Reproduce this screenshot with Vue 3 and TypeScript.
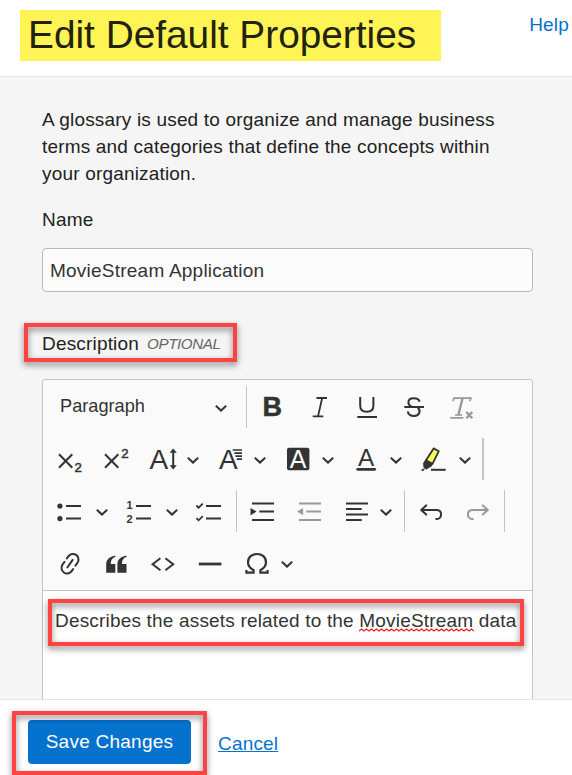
<script setup lang="ts">
import { ref } from 'vue'

interface Tool {
  kind: 'button' | 'dropdown' | 'split' | 'separator'
  label?: string
  icon?: string
  disabled?: boolean
  thick?: boolean
  compact?: boolean
}

const name = ref('MovieStream Application')
const separator: Tool = { kind: 'separator' }

const capital = (x: number, y: number, size: number, extra = '') =>
  `<text x="${x}" y="${y}" font-size="${size}" fill="currentColor" stroke="none" ${extra}>A</text>`
const digit = (value: string, x: number, y: number, size: number, weight = 700) =>
  `<text x="${x}" y="${y}" font-size="${size}" font-weight="${weight}" fill="currentColor" stroke-width="${weight > 400 ? 0 : 0.5}">${value}</text>`

const squiggle = 'M0 3' + Array.from({ length: 23 }, () => 'l2.500-2 2.500 2').join('')

const formatting: Tool[] = [
  { kind: 'button', label: 'Bold', icon: '<text x="3.4" y="23.4" font-size="27" font-weight="700" fill="currentColor" stroke-width=".5">B</text>' },
  { kind: 'button', label: 'Italic', icon: '<path stroke-width="1.8" d="M10.5 5h10.5M6.7 23.3h10.6M16.2 5l-4.2 18.3"/>' },
  { kind: 'button', label: 'Underline', icon: '<path d="M7.2 4v8.5c0 4 2.5 6.3 6.6 6.3s6.6-2.3 6.600-6.300V4M4.300 24H24"/>' },
  { kind: 'button', label: 'Strikethrough', icon: '<path d="M19.6 8.800C18.600 3.900 8.400 3.800 8.400 9.200c0 2 1 3.400 3 4.300M17.700 14.500c3.600 3.200 1.800 8.400-3.600 8.400-3.600 0-5.900-1.500-6.300-4.600M4.300 13.900H24"/>' },
  { kind: 'button', label: 'Remove format', disabled: true, icon: '<path stroke-width="1.7" d="M6 8.200l.9-3h17l-.9 3M8 22h7M3.300 24.800h13"/><path stroke-width="2.400" d="M15.500 5.200L11.400 22"/><path stroke-width="2.300" d="M19.300 19l6 6.200M25.300 19l-6 6.200"/>' },
]

const rows: Tool[][] = [
  [
    { kind: 'button', label: 'Subscript', icon: '<path d="M3 9.2l13.3 13.6M16.3 9.2L3 22.8"/>' + digit('2', 18.4, 26.6, 13.2, 400) },
    { kind: 'button', label: 'Superscript', icon: '<path d="M2 9.2l13.3 13.6M15.3 9.2L2 22.8"/>' + digit('2', 18.3, 13.4, 13.2, 400) },
    { kind: 'dropdown', label: 'Font size', icon: capital(-0.4, 24, 28) + '<path d="M23.2 6v16"/><path fill="currentColor" stroke="none" d="M23.2 3.6l3.6 4.2h-7.2zM23.2 24.4l3.6-4.2h-7.2z"/>' },
    { kind: 'dropdown', label: 'Font family', compact: true, icon: capital(1, 24, 28) + '<path stroke-width="1.6" d="M14.7 5H24M16.3 8.1H24M17.5 11.1H24M18.8 14.1H24"/>' },
    { kind: 'dropdown', label: 'Font background', compact: true, icon: '<rect x="1" y="2.8" width="22.4" height="22.4" rx="2" fill="currentColor" stroke="none"/><text x="3.7" y="22.5" font-size="25" fill="#fff" stroke="none">A</text>' },
    { kind: 'dropdown', label: 'Font colour', compact: true, icon: capital(4, 21, 24.3) + '<path stroke-width="2.8" stroke-linecap="round" d="M3.7 24.3h17"/>' },
    { kind: 'dropdown', label: 'Highlight', icon: '<path fill="#fdfb5e" stroke-width="1.8" stroke-linejoin="round" d="M11.6 3.4l5.2 2.8L10.5 18.8 4 15.3z"/><path fill="currentColor" stroke="none" d="M3.4 14.6l7.8 4.2-1.7 2.8-5.3 2.8-2.5-1.3-.7-4.7zM.6 23.4l2.2 1.2-1.1 1.2h-2.8z"/><path d="M9 24.8h14.7"/>' },
    { kind: 'separator', thick: true },
  ],
  [
    { kind: 'split', label: 'Bulleted list', icon: '<circle cx="3.9" cy="9" r="2.6" fill="currentColor" stroke="none"/><circle cx="3.9" cy="21.6" r="2.6" fill="currentColor" stroke="none"/><path d="M10 9h15M10 21.6h15"/>' },
    { kind: 'split', label: 'Numbered list', icon: digit('1', 0.4, 12.4, 11) + digit('2', 0.4, 25.9, 11) + '<path d="M10 9h15M10 21.6h15"/>' },
    { kind: 'button', label: 'To-do list', icon: '<path stroke-width="1.8" d="M.4 8.5l2.2 2.2 4.2-4.1M.4 21.1l2.2 2.2 4.2-4.1"/><path d="M10 9h15M10 21.6h15"/>' },
    separator,
    { kind: 'button', label: 'Increase indent', icon: '<path d="M3 6.4h22M10.3 14.6H25M3 23h22"/><path fill="currentColor" stroke="none" d="M1.5 10.9l6.1 3.7-6.1 3.7z"/>' },
    { kind: 'button', label: 'Decrease indent', disabled: true, icon: '<path d="M3 6.4h22M10.3 14.6H25M3 23h22"/><path fill="currentColor" stroke="none" d="M7.1 10.9L1 14.6l6.1 3.7z"/>' },
    { kind: 'dropdown', label: 'Text alignment', icon: '<path d="M3 6.4h22M3 11.9h15.7M3 17.4h22M3 23h15.7"/>' },
    separator,
    { kind: 'button', label: 'Undo', icon: '<path stroke-linecap="round" stroke-linejoin="round" d="M9.200 8.400L4.200 13l5 4.600M4.200 13h14.900c3.200 0 5 1.700 5 4.400s-2 4.600-4.900 4.600"/>' },
    { kind: 'button', label: 'Redo', disabled: true, icon: '<path stroke-linecap="round" stroke-linejoin="round" d="M18.800 8.400l5 4.600-5 4.600M23.800 13H8.900c-3.200 0-5 1.700-5 4.400s2 4.600 4.900 4.600"/>' },
    separator,
  ],
  [
    { kind: 'button', label: 'Link', icon: '<g transform="translate(14 14.7) rotate(35)" stroke-linecap="round"><path d="M-5.6-2.5v-2.6a5.6 5.6 0 0 1 11.2 0v3.6M5.6 2.5v2.6a5.6 5.6 0 0 1-11.2 0V1.5M0-4.6v9.2"/></g>' },
    { kind: 'button', label: 'Block quote', icon: '<path fill="currentColor" stroke="none" d="M3.2 23.8v-8.6c0-4.5 3.4-8 9.1-8.5v1.2c-2.8.7-4.6 3-4.6 7.1h4.6v8.8zM14.4 23.8v-8.6c0-4.5 3.4-8 9.1-8.5v1.2c-2.8.7-4.6 3-4.6 7.1h4.6v8.8z"/>' },
    { kind: 'button', label: 'Source', icon: '<path d="M10.4 9.3l-7.8 6 7.8 6M15.4 9.3l7.8 6-7.8 6"/>' },
    { kind: 'button', label: 'Horizontal line', icon: '<path stroke-width="2.8" d="M1.8 15h22.6"/>' },
    { kind: 'dropdown', label: 'Special characters', icon: '<path stroke-width="2.2" d="M2.4 21v2.7h7.2v-2.5C6.3 19.5 4 17 4 13.3c0-5.2 4-8.3 9-8.3s9 3.1 9 8.3c0 3.7-2.3 6.2-5.6 7.9v2.5h7.2V21"/>' },
  ],
]
</script>

<template>
  <div class="panel">
    <header class="head">
      <h1 class="title">Edit Default Properties</h1>
      <a class="help">Help</a>
    </header>

    <main class="content">
      <p class="intro">A glossary is used to organize and manage business<br>terms and categories that define the concepts within<br>your organization.</p>
      <label class="label" for="name">Name</label>
      <input id="name" v-model="name" class="input" type="text">
      <div class="label description">
        Description<em class="optional">OPTIONAL</em>
        <span class="mark mark-label"></span>
      </div>

      <section class="editor">
        <div class="toolbar">
          <div class="row">
            <button class="heading" type="button">
              <span>Paragraph</span>
              <svg class="chevron" viewBox="0 0 12 7"><path d="M.8.8 6 5.6 11.2.8" /></svg>
            </button>
            <i class="separator"></i>
            <button v-for="tool in formatting" :key="tool.label" class="tool" :class="{ disabled: tool.disabled }" type="button" :aria-label="tool.label">
              <svg class="icon" viewBox="0 0 28 28" v-html="tool.icon"></svg>
            </button>
          </div>
          <div v-for="(row, r) in rows" :key="r" class="row">
            <template v-for="(tool, i) in row" :key="i">
              <i v-if="tool.kind === 'separator'" class="separator" :class="{ thick: tool.thick }"></i>
              <button v-else class="tool" :class="[tool.kind, { disabled: tool.disabled, compact: tool.compact }]" type="button" :aria-label="tool.label">
                <svg class="icon" viewBox="0 0 28 28" v-html="tool.icon"></svg>
                <svg v-if="tool.kind !== 'button'" class="chevron" viewBox="0 0 12 7"><path d="M.8.8 6 5.6 11.2.8" /></svg>
              </button>
            </template>
          </div>
        </div>
        <div class="editable">
          Describes the assets related to the <span class="misspelt">MovieStream<svg class="squiggle" viewBox="0 0 115 4"><path :d="squiggle" /></svg></span> data
          <span class="mark mark-text"></span>
        </div>
      </section>
    </main>

    <footer class="foot">
      <button class="save" type="button">Save Changes</button>
      <a class="cancel">Cancel</a>
      <span class="mark mark-save"></span>
    </footer>
  </div>
</template>

<style>
body {
  margin: 0;
  overflow: hidden;
}
</style>

<style scoped>
.panel {
  display: flex;
  flex-direction: column;
  width: 572px;
  height: 775px;
  overflow: hidden;
  background: #fff;
  color: #222;
  font-family: "Liberation Sans", Arial, sans-serif;
  font-size: 19px;
  letter-spacing: 0.18px;
}
.panel * {
  box-sizing: border-box;
}
button {
  padding: 0;
  border: 0;
  background: none;
  color: inherit;
  font: inherit;
  letter-spacing: inherit;
}
.head {
  display: flex;
  flex: none;
  align-items: flex-start;
  justify-content: space-between;
  height: 77px;
  padding: 10px 3px 0 20px;
  border-bottom: 1px solid #e3e3e3;
}
.title {
  width: 421px;
  height: 51px;
  margin: 0;
  padding-left: 8px;
  background: #fff455;
  color: #22220f;
  font-size: 38.8px;
  font-weight: 400;
  line-height: 50px;
  letter-spacing: 0;
}
.help {
  color: #0572ce;
  line-height: 30px;
}
.content {
  flex: none;
  height: 622px;
  padding: 29px 39px 0 42px;
  overflow: hidden;
  background: #f5f5f5;
}
.intro {
  margin: 0 0 19px;
  line-height: 27px;
  white-space: nowrap;
}
.label {
  display: block;
  line-height: 27px;
}
.input {
  display: block;
  width: 100%;
  height: 44px;
  margin: 15px 0 38px;
  padding: 1px 7px 0;
  border: 1px solid #b4b9c2;
  border-radius: 4px;
  outline: 0;
  background: #fcfcfc;
  color: #333;
  font: inherit;
  letter-spacing: 0.23px;
}
.description {
  position: relative;
  display: flex;
  align-items: center;
  height: 27px;
}
.optional {
  margin: -1px 0 0 8px;
  color: #666;
  font-size: 15.2px;
  letter-spacing: -0.4px;
}
.editor {
  height: 340px;
  margin-top: 22px;
  border: 1px solid #c4c4c4;
  border-radius: 3px 3px 0 0;
  background: #fff;
}
.toolbar {
  height: 211px;
  padding: 1px 0 0 3px;
  border-bottom: 1px solid #c4c4c4;
  border-radius: 3px 3px 0 0;
  background: #fafafa;
  color: #333;
}
.row {
  display: flex;
  align-items: center;
  height: 52px;
}
.heading {
  display: flex;
  align-items: center;
  justify-content: space-between;
  width: 197px;
  padding: 0 16px 0 14px;
  font-size: 18.2px;
  letter-spacing: 0;
}
.heading span {
  margin-top: -2px;
}
.tool {
  display: flex;
  flex: none;
  align-items: center;
  gap: 9px;
  width: 47px;
  height: 42px;
  padding-left: 10px;
}
.dropdown {
  width: 68px;
}
.compact {
  gap: 8px;
}
.split {
  gap: 12px;
  width: 70px;
}
.disabled {
  color: #999;
}
.icon {
  flex: none;
  width: 28px;
  height: 28px;
  overflow: visible;
  fill: none;
  stroke: currentColor;
  stroke-width: 2;
  letter-spacing: 0;
}
.chevron {
  flex: none;
  width: 12px;
  height: 7px;
  margin-top: 3px;
  fill: none;
  stroke: currentColor;
  stroke-width: 2;
}
.separator {
  flex: none;
  width: 1px;
  height: 42px;
  margin: 0 2px 0 3px;
  background: #c4c4c4;
}
.thick {
  width: 2px;
  margin-left: 2px;
}
.editable {
  position: relative;
  height: 128px;
  padding: 16px 0 0 12px;
  color: #333;
  line-height: 27px;
  white-space: nowrap;
}
.misspelt {
  position: relative;
}
.squiggle {
  position: absolute;
  bottom: -1px;
  left: 0;
  width: 115px;
  height: 4px;
  fill: none;
  stroke: #f01f1f;
  stroke-width: 1.3;
}
.foot {
  position: relative;
  display: flex;
  flex: none;
  align-items: flex-start;
  gap: 27px;
  height: 76px;
  padding: 20px 0 0 28px;
  border-top: 1px solid #e3e3e3;
}
.save {
  width: 163px;
  height: 44px;
  border-radius: 4px;
  background: #0572ce;
  color: #fff;
  letter-spacing: 0.25px;
}
.cancel {
  color: #0572ce;
  line-height: 47px;
  text-decoration: underline;
}
.mark {
  position: absolute;
  border: 4px solid #ff4343;
  filter: drop-shadow(0 3px 3px rgba(0, 0, 0, 0.5));
  pointer-events: none;
}
.mark-label {
  top: -7px;
  left: -18px;
  width: 213px;
  height: 39px;
}
.mark-text {
  top: 8px;
  left: 5px;
  width: 476px;
  height: 47px;
}
.mark-save {
  top: 11px;
  left: 12px;
  width: 195px;
  height: 64px;
}
</style>
